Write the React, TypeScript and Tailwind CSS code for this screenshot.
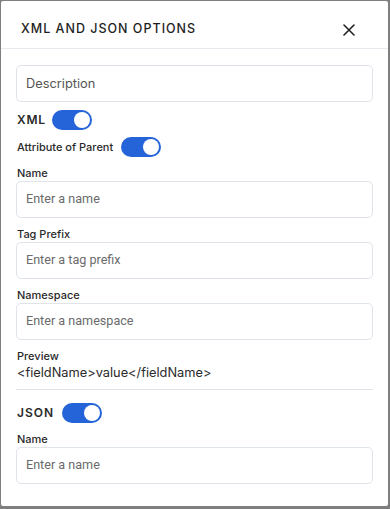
import React from "react";

const Toggle = () => (
  <div className="w-[40px] h-[20px] rounded-full bg-[#2563d9] flex items-center justify-end px-[2px]">
    <div className="w-[16px] h-[16px] rounded-full bg-white" />
  </div>
);

const Input = ({ placeholder }: { placeholder: string }) => (
  <div className="h-[37px] rounded-[5px] border border-[#dfe3ea] flex items-center px-[9px]">
    <span className="text-[12.6px] text-[#6b6b6b]" style={{ fontFamily: "Roboto, sans-serif" }}>
      {placeholder}
    </span>
  </div>
);

const Label = ({ children }: { children: React.ReactNode }) => (
  <div className="text-[11px] font-medium text-[#2a2a2a] leading-[14px]">{children}</div>
);

export default function App() {
  return (
    <div
      className="w-[390px] h-[509px] bg-[#7f7f7f] pl-[1px] pt-[1px] pr-[2px] pb-[3px]"
      style={{ fontFamily: "Inter, 'Noto Sans', sans-serif" }}
    >
      <div className="w-full h-full bg-white rounded-[2px] flex flex-col">
        <div className="h-[48px] border-b border-[#e7e9ee] flex items-center justify-between pt-[10px] pl-[20px] pr-[33px]">
          <div className="text-[12.5px] font-medium tracking-[1px] text-[#1e1e1e]">XML AND JSON OPTIONS</div>
          <svg width="12" height="12" viewBox="0 0 12 12" className="text-[#222]">
            <path d="M1 1L11 11M11 1L1 11" stroke="currentColor" strokeWidth="1.6" strokeLinecap="round" />
          </svg>
        </div>
        <div className="px-[15px] pt-[16px] flex flex-col">
          <div className="h-[37px] rounded-[5px] border border-[#dfe3ea] flex items-center px-[9px]">
            <span className="text-[12.8px] text-[#555]">Description</span>
          </div>
          <div className="flex items-center gap-[6px] mt-[7px] h-[22px] pl-[1px]">
            <span className="text-[12px] font-semibold tracking-[0.8px] text-[#2a2a2a]">XML</span>
            <Toggle />
          </div>
          <div className="flex items-center gap-[8px] mt-[5px] h-[22px] pl-[1px]">
            <Label>Attribute of Parent</Label>
            <Toggle />
          </div>
          <div className="mt-[8px] pl-[1px]"><Label>Name</Label></div>
          <div className="mt-[1px]"><Input placeholder="Enter a name" /></div>
          <div className="mt-[9px] pl-[1px]"><Label>Tag Prefix</Label></div>
          <div className="mt-[1px]"><Input placeholder="Enter a tag prefix" /></div>
          <div className="mt-[9px] pl-[1px]"><Label>Namespace</Label></div>
          <div className="mt-[1px]"><Input placeholder="Enter a namespace" /></div>
          <div className="mt-[9px] pl-[1px]"><Label>Preview</Label></div>
          <div className="mt-[1px] pl-[1px] text-[12.8px] text-[#2a2a2a] leading-[18px]">&lt;fieldName&gt;value&lt;/fieldName&gt;</div>
          <div className="mt-[7px] border-t border-[#dfe3ea]" />
          <div className="flex items-center gap-[8px] mt-[12px] h-[22px] pl-[1px]">
            <span className="text-[12px] font-semibold tracking-[1px] text-[#2a2a2a]">JSON</span>
            <Toggle />
          </div>
          <div className="mt-[8px] pl-[1px]"><Label>Name</Label></div>
          <div className="mt-[1px]"><Input placeholder="Enter a name" /></div>
        </div>
      </div>
    </div>
  );
}
